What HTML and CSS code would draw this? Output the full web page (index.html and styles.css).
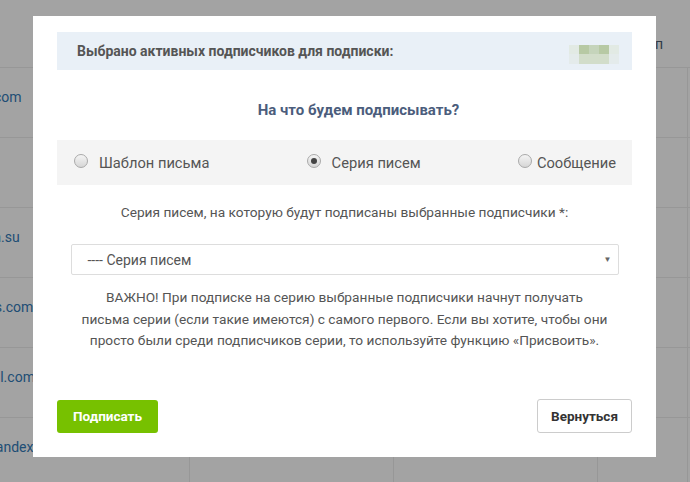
FILE: index.html
```html
<!DOCTYPE html>
<html lang="ru">
<head>
    <meta charset="UTF-8">
    <meta name="viewport" content="width=device-width, initial-scale=1.0">
    <title>Подписка на серию писем</title>
    <link rel="stylesheet" href="styles.css">
</head>
<body>
    <div class="page">
        <table class="subscribers">
            <tr class="subscribers-head">
                <th class="col-email"></th>
                <th class="col-mid"></th>
                <th class="col-mid"></th>
                <th class="col-type">Тип</th>
                <th class="col-rest"></th>
            </tr>
            <tr>
                <td>irina.kovaleva8@bk.com</td>
                <td></td><td></td><td></td><td></td>
            </tr>
            <tr>
                <td></td>
                <td></td><td></td><td></td><td></td>
            </tr>
            <tr>
                <td>sergey.petrov@posta.su</td>
                <td></td><td></td><td></td><td></td>
            </tr>
            <tr>
                <td>contact@newsletters.com</td>
                <td></td><td></td><td></td><td></td>
            </tr>
            <tr>
                <td>ekaterina.volk@gmail.com</td>
                <td></td><td></td><td></td><td></td>
            </tr>
            <tr>
                <td>dmitry.sokolov83@yandex.ru</td>
                <td></td><td></td><td></td><td></td>
            </tr>
        </table>
    </div>

    <div class="overlay">
        <div class="modal">
            <div class="selected-bar">
                <span>Выбрано активных подписчиков для подписки:</span>
                <span class="blurred-count">
                    <i class="px c1"></i><i class="px c2"></i><i class="px c3"></i><i class="px c2"></i><i class="px c1"></i>
                    <i class="px c4"></i><i class="px c5"></i><i class="px c5"></i><i class="px c5"></i><i class="px c4"></i>
                </span>
            </div>

            <div class="modal-title">На что будем подписывать?</div>

            <div class="radio-bar">
                <label class="radio-option gap-wide">
                    <span class="radio"></span>
                    <span>Шаблон письма</span>
                </label>
                <label class="radio-option gap-wide">
                    <span class="radio checked"></span>
                    <span>Серия писем</span>
                </label>
                <label class="radio-option">
                    <span class="radio"></span>
                    <span>Сообщение</span>
                </label>
            </div>

            <div class="field-label">Серия писем, на которую будут подписаны выбранные подписчики *:</div>

            <div class="select">
                <span>---- Серия писем</span>
                <span class="select-arrow">&#9660;</span>
            </div>

            <p class="notice">
                ВАЖНО! При подписке на серию выбранные подписчики начнут получать<br>
                письма серии (если такие имеются) с самого первого. Если вы хотите, чтобы они<br>
                просто были среди подписчиков серии, то используйте функцию «Присвоить».
            </p>

            <div class="modal-footer">
                <button type="button" class="btn btn-primary">Подписать</button>
                <button type="button" class="btn btn-default">Вернуться</button>
            </div>
        </div>
    </div>
</body>
</html>
```

FILE: styles.css
```css
body {
    margin: 0;
    font-family: Roboto, 'Liberation Sans', Arial, sans-serif;
    background-color: #fff;
    overflow: hidden;
    height: 482px;
}

/* таблица подписчиков под модальным окном */
.page {
    overflow: hidden;
}

.subscribers {
    border-collapse: collapse;
    margin-left: -140px;
    table-layout: fixed;
    width: 1000px;
    font-size: 14px;
    color: #337ab7;
}

.subscribers th {
    height: 67px;
    border-bottom: 1px solid #ececec;
    text-align: right;
    vertical-align: top;
    padding: 36px 24px 0 0;
    box-sizing: border-box;
    color: #4a5b70;
    font-weight: normal;
}

.subscribers td {
    height: 70px;
    box-sizing: border-box;
    border-bottom: 1px solid #ececec;
    border-left: 1px solid #ececec;
    vertical-align: top;
    padding: 21px 10px 0;
    white-space: nowrap;
}

.subscribers td:first-child {
    border-left: none;
}

.col-email { width: 329px; }
.col-mid { width: 204px; }
.col-type { width: 90px; }

.overlay {
    position: fixed;
    inset: 0;
    background-color: rgba(0, 0, 0, 0.36);
    padding: 16px 0 0 33px;
}

.modal {
    width: 623px;
    height: 441px;
    box-sizing: border-box;
    background-color: #fff;
    padding: 16px 24px 24px;
    display: flex;
    flex-direction: column;
    color: #555;
    font-size: 13.7px;
}

.selected-bar {
    height: 38px;
    background-color: #e9f0f7;
    display: flex;
    justify-content: space-between;
    align-items: center;
    padding: 0 13px 0 20px;
    font-size: 14px;
    font-weight: bold;
    color: #555;
}

.blurred-count {
    display: grid;
    grid-template-columns: repeat(5, 10px);
    grid-template-rows: 9px 10px;
    margin-top: 6px;
}

.px { display: block; }
.px.c1 { background-color: #e2eae4; }
.px.c2 { background-color: #b7c9a4; }
.px.c3 { background-color: #c5d4bb; }
.px.c4 { background-color: #e4ebeb; }
.px.c5 { background-color: #d2ddca; }

.modal-title {
    margin-top: 30px;
    padding-left: 28px;
    text-align: center;
    font-size: 15px;
    line-height: 20px;
    font-weight: bold;
    color: #4b5d7c;
}

.radio-bar {
    margin-top: 20px;
    height: 45px;
    background-color: #f4f4f4;
    display: flex;
    justify-content: space-between;
    align-items: center;
    padding: 0 16px 0 17px;
    font-size: 14.7px;
}

.radio-option {
    display: flex;
    align-items: center;
    gap: 5px;
}

.radio-option.gap-wide {
    gap: 11px;
}

.radio {
    width: 12px;
    height: 12px;
    border-radius: 50%;
    border: 1px solid #a9a9a9;
    background: linear-gradient(#f4f4f4, #d6d6d6);
    display: flex;
    justify-content: center;
    align-items: center;
    margin-top: -3px;
}

.radio.checked::after {
    content: "";
    width: 6px;
    height: 6px;
    border-radius: 50%;
    background-color: #444;
}

.field-label {
    margin-top: 17px;
    text-align: center;
    line-height: 20px;
}

.select {
    margin: 22px auto 0;
    width: 548px;
    height: 31px;
    box-sizing: border-box;
    border: 1px solid #ddd;
    border-radius: 2px;
    display: flex;
    justify-content: space-between;
    align-items: center;
    padding: 0 6px 0 16px;
    font-size: 14px;
}

.select-arrow {
    font-size: 8px;
    color: #666;
}

.notice {
    margin: 12px 0 0;
    text-align: center;
    line-height: 21.5px;
}

.modal-footer {
    margin-top: auto;
    display: flex;
    justify-content: space-between;
    align-items: center;
}

.btn {
    font-family: inherit;
    font-size: 13.5px;
    font-weight: bold;
    border-radius: 3px;
    cursor: pointer;
}

.btn-primary {
    width: 101px;
    height: 33px;
    border: none;
    background-color: #77c100;
    color: #fff;
}

.btn-default {
    width: 95px;
    height: 34px;
    border: 1px solid #ccc;
    background-color: #fff;
    color: #333;
}
```
